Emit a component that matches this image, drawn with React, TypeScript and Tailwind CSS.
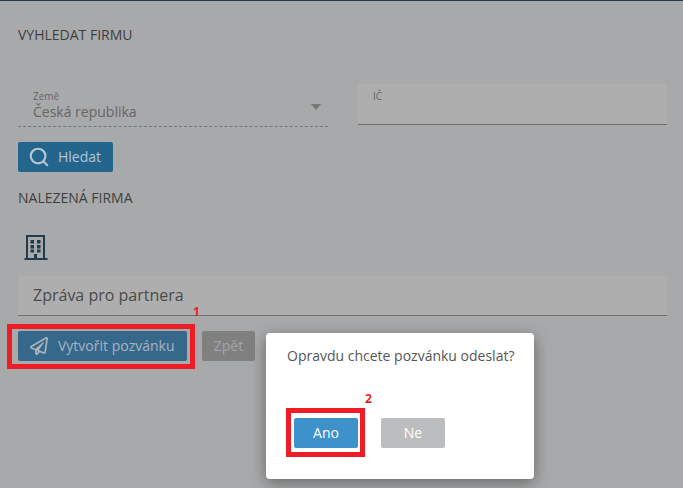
import { Search } from "lucide-react";
import { FaRegPaperPlane } from "react-icons/fa";

function BuildingIcon() {
  return (
    <svg width="24" height="26" viewBox="0 0 24 26">
      <path
        fillRule="evenodd"
        fill="#1f3b4d"
        d="M2 0h19v23h2.500v2H.5v-2H2V0zm2 2v21h6v-4h3v4h6V2H4z"
      />
      <path
        fill="#1f3b4d"
        d="M6.500 5h3.500v3.500H6.500zM13 5h3.500v3.500H13zM6.500 10h3.500v3.500H6.500zM13 10h3.500v3.500H13zM6.500 14.500h3.500v3H6.500zM13 14.500h3.500v3H13z"
      />
    </svg>
  );
}

export default function App() {
  return (
    <div className="relative h-[488px] w-[683px] overflow-hidden border-t border-[#1f3a4a] bg-[#a8a9aa] font-['Open_Sans',sans-serif] text-[#3f3f3f]">
      <div className="flex flex-col pl-[18px] pr-4">
        <h2 className="mt-[25px] text-sm leading-[18px]">VYHLEDAT FIRMU</h2>

        <div className="mt-[40px] grid h-[43px] grid-cols-[310px_309px] gap-x-[30px]">
          <div className="relative border-b border-dashed border-[#777] pl-[15px] pt-[6px] text-[#666]">
            <div className="text-[10px] leading-[12px]">Země</div>
            <div className="text-sm leading-[20px]">Česká republika</div>
            <div className="absolute right-[7px] top-[20px] h-0 w-0 border-x-[5px] border-t-[6px] border-x-transparent border-t-[#777]" />
          </div>
          <div className="h-[41px] rounded-t-[2px] border-b border-[#6f6f6f] bg-[#aeaeae] pl-[15px] pt-[6px] text-[10px] leading-[12px] text-[#666]">
            IČ
          </div>
        </div>

        <div className="mt-[15px] flex">
          <button className="flex h-[30px] w-[95px] items-center gap-[8px] rounded-[2px] bg-[#23658d] pl-[10px] text-sm text-[#b5c5d0]">
            <Search size={22} strokeWidth={2.4} className="text-[#b5c5d0]" />
            Hledat
          </button>
        </div>

        <h2 className="mt-[17px] text-sm leading-[18px]">NALEZENÁ FIRMA</h2>

        <div className="mt-[28px] pl-[6px]">
          <BuildingIcon />
        </div>

        <div className="mt-[15px] h-[40px] w-[649px] border-b border-[#6f6f6f] bg-[#aeaeae] pl-[15px] text-base leading-[38px] text-[#4a4a4a]">
          Zpráva pro partnera
        </div>

        <div className="mt-[15px] flex gap-[15px]">
          <button className="flex h-[30px] w-[169px] items-center gap-[10px] rounded-[2px] bg-[#36688c] pl-3 text-sm text-[#a9b4bc]">
            <FaRegPaperPlane size={18} className="text-[#a9b4bc]" />
            Vytvořit pozvánku
          </button>
          <button className="h-[30px] w-[53px] rounded-[2px] bg-[#808080] text-sm text-[#a3a3a3]">
            Zpět
          </button>
        </div>
      </div>

      {/* annotation 1 */}
      <div className="absolute left-[7px] top-[323px] h-[45px] w-[188px] border-[5px] border-[#ee1c25]" />
      <div className="absolute left-[193px] top-[304px] text-xs font-bold leading-[14px] text-[#ee1c25]">1</div>

      {/* dialog */}
      <div className="absolute left-[266px] top-[332px] h-[146px] w-[268px] rounded bg-white shadow-[0_4px_16px_rgba(0,0,0,0.4)]">
        <p className="pl-[21px] pt-[13px] text-sm leading-[20px] text-[#555]">Opravdu chcete pozvánku odeslat?</p>
        <div className="mt-[52px] flex gap-[23px] pl-[28px]">
          <button className="h-[30px] w-[64px] rounded-[2px] bg-[#3d92cb] text-sm text-white">Ano</button>
          <button className="h-[30px] w-[64px] rounded-[2px] bg-[#bcbdbe] text-sm font-medium text-white">Ne</button>
        </div>
      </div>

      {/* annotation 2 */}
      <div className="absolute left-[365px] top-[391px] text-xs font-bold leading-[14px] text-[#ee1c25]">2</div>
      <div className="absolute left-[286px] top-[407px] h-[49px] w-[79px] border-[5px] border-[#ee1c25]" />
    </div>
  );
}
